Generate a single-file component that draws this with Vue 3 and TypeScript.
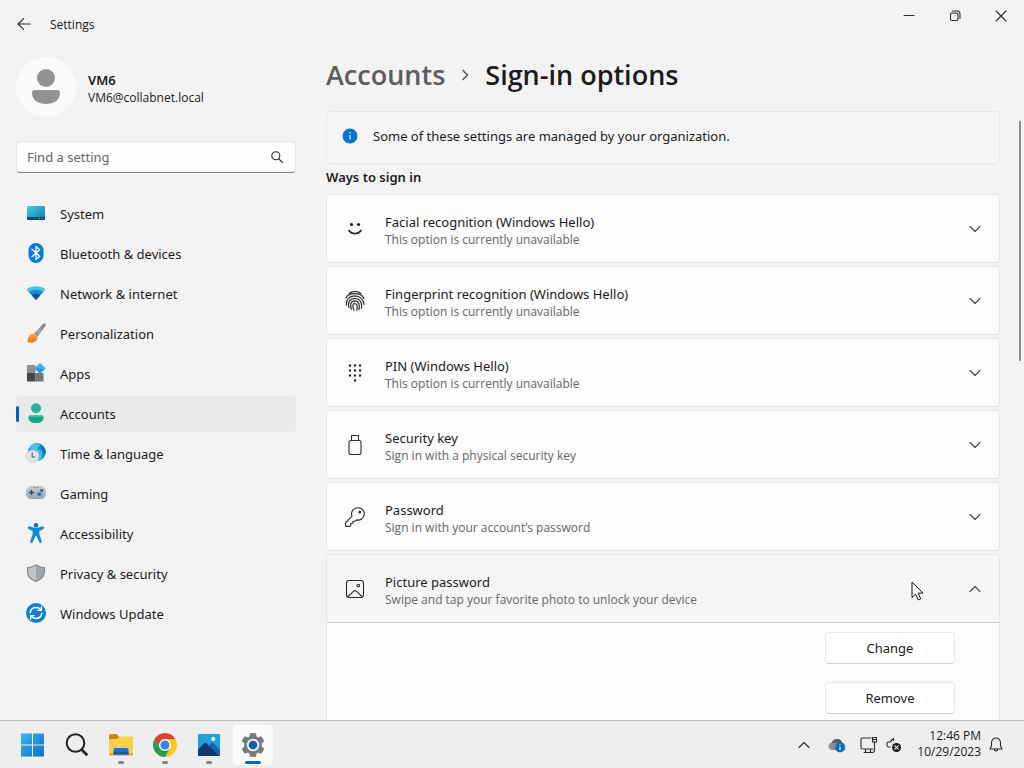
<script setup lang="ts">
import { ref } from 'vue'

interface NavItem {
  label: string
  art: string
}

interface SignInOption {
  title: string
  note: string
  art: string
}

const query = ref('')
const current = ref('Accounts')
const expanded = ref('Picture password')

const navItems: NavItem[] = [
  {
    label: 'System',
    art: `<defs><linearGradient id="sys" x1="0" y1="0" x2="1" y2="1"><stop offset="0" stop-color="#3fd0e6"/><stop offset="1" stop-color="#0f7ba8"/></linearGradient></defs>
      <rect x="1" y="3" width="18" height="14" rx="1.2" fill="url(#sys)"/><path d="M1 14h18v1.8a1.2 1.2 0 0 1-1.2 1.2H2.200A1.200 1.200 0 0 1 1 15.800z" fill="#0b4a6b"/><path d="M13 15.500h1M15.500 15.500h1" stroke="#9bd7ea" stroke-width="0.800"/>`,
  },
  {
    label: 'Bluetooth & devices',
    art: `<rect x="2.500" y="0" width="15" height="20" rx="7.500" fill="#0a78dc"/><path d="M6 6.300l7.700 7-3.700 3.300V3.400l3.700 3.300-7.700 7" fill="none" stroke="#fff" stroke-width="1.300" stroke-linejoin="round" stroke-linecap="round"/>`,
  },
  {
    label: 'Network & internet',
    art: `<path d="M0.500 6.500C5.500 2.200 14.500 2.200 19.500 6.500L10 17z" fill="#45c3f0"/><path d="M3 9.300c4-3.300 10-3.300 14 0L10 17z" fill="#1d8ad6"/><path d="M5.800 12.300c2.500-2 5.900-2 8.400 0L10 17z" fill="#0c539b"/>`,
  },
  {
    label: 'Personalization',
    art: `<defs><linearGradient id="hdl" x1="1" y1="0" x2="0" y2="1"><stop offset="0" stop-color="#6f7377"/><stop offset="0.600" stop-color="#a9acb0"/><stop offset="1" stop-color="#77797c"/></linearGradient><linearGradient id="tip" x1="0" y1="0" x2="0" y2="1"><stop offset="0" stop-color="#f9a23c"/><stop offset="1" stop-color="#ea6f1c"/></linearGradient></defs>
      <path d="M19 0.600c1 .6.800 1.700.2 2.700l-7.700 10.600-3.600-3.200 8.600-9.300c.8-.8 1.600-1.200 2.500-.8z" fill="url(#hdl)"/><path d="M7.600 10.700l3.800 3.400c.5 3.900-4.400 7-11.100 4.700 2.400-.8 1.300-2.200 2.100-4.600.8-2.400 3.300-3.500 5.200-3.500z" fill="url(#tip)"/>`,
  },
  {
    label: 'Apps',
    art: `<rect x="1" y="2" width="8.500" height="8" fill="#8c8f92"/><rect x="1" y="10" width="8.500" height="8.500" fill="#45484b"/><rect x="9.500" y="10" width="8" height="8.500" fill="#74777a"/><path d="M14 .600l5 4.800-5 5-5-5z" fill="#2597e3" stroke="#2597e3" stroke-linejoin="round"/><path d="M14 .600l5 4.800H9z" fill="#41b0f0"/>`,
  },
  {
    label: 'Accounts',
    art: `<circle cx="10" cy="5.300" r="5" fill="#22b496"/><path d="M2.400 14.200c0-1.200.9-2 2-2h11.200c1.100 0 2 .8 2 2 0 3.600-3 5.800-7.600 5.800s-7.600-2.200-7.600-5.800z" fill="#14a683"/><path d="M2.500 13.700c.2-.9 1-1.500 1.900-1.500h11.200c.9 0 1.700.6 1.900 1.500z" fill="#45c9ac"/>`,
  },
  {
    label: 'Time & language',
    art: `<circle cx="11" cy="9" r="9" fill="#1a9bd0"/><path d="M4 3.400c3-3.800 8-3.800 9-1.600.8 1.800-1.600 2.500-1.200 4.200.5 1.700 3.400.2 4 3 .5 2.500-1.300 3.600 0 6.400-4 4-8 2.500-9.800.8z" fill="#43c4e6"/><path d="M14 2.500l4 2.200 1.600 4.500-2 2z" fill="#0c6fb4"/><circle cx="6.600" cy="13.200" r="6.300" fill="#e4e5e7" stroke="#b8bbbf" stroke-width="0.600"/><path d="M6.200 9.400v4.600h3" fill="none" stroke="#4d555d" stroke-width="1.100"/>`,
  },
  {
    label: 'Gaming',
    art: `<defs><linearGradient id="pad" x1="0" y1="0" x2="0" y2="1"><stop offset="0" stop-color="#c6cbd1"/><stop offset="1" stop-color="#9aa3ad"/></linearGradient></defs><path d="M6 3h8c3.800 0 6 3 6 6.500 0 4.200-1.800 6.500-5 6.500H5c-3.200 0-5-2.300-5-6.500C0 6 2.200 3 6 3z" fill="url(#pad)"/><path d="M3 9.500h5M5.500 7v5" stroke="#384048" stroke-width="1.300"/><circle cx="15.700" cy="7.500" r="1.600" fill="#1e63ae"/><circle cx="13.400" cy="11.200" r="1.900" fill="#2573bd"/><path d="M8 4.500h1M10.700 4.500h1" stroke="#53606c"/>`,
  },
  {
    label: 'Accessibility',
    art: `<circle cx="10" cy="2.300" r="2.200" fill="#0e6fb8"/><path d="M2 4.200c.4-1 1.300-1.100 2.100-.7C8 5.300 12 5.300 15.900 3.500c.8-.4 1.700-.3 2.100.7.300.9 0 1.600-.9 2L13.400 8v3.400l2.400 6.800c.3.9-.1 1.500-.8 1.700-.8.200-1.500-.1-1.800-.9L10.400 13h-.8l-2.800 6c-.3.800-1 1.100-1.800.9-.7-.2-1.100-.8-.8-1.700l2.400-6.800V8L2.900 6.200c-.9-.4-1.200-1.100-.9-2z" fill="#1889d8"/>`,
  },
  {
    label: 'Privacy & security',
    art: `<path d="M10 1c3 2 5.500 2.700 9 3v5c0 4.800-3.500 7.800-9 10-5.500-2.200-9-5.200-9-10V4c3.500-.3 6-1 9-3z" fill="#8a8d90"/><path d="M10 2.500c2.600 1.600 4.800 2.300 7.700 2.600V9c0 4-2.800 6.600-7.700 8.600z" fill="#a3a6a9"/><path d="M10 2.500C7.400 4.100 5.200 4.800 2.300 5.100V9c0 4 2.800 6.600 7.700 8.600z" fill="#c2c4c6"/>`,
  },
  {
    label: 'Windows Update',
    art: `<circle cx="10" cy="10" r="10" fill="#0f7fd0"/><path d="M4.200 9.500c.6-3 3-4.900 5.800-4.900 2 0 3.600.8 4.800 2.200M15.800 10.500c-.6 3-3 4.900-5.800 4.900-2 0-3.600-.8-4.800-2.200" fill="none" stroke="#fff" stroke-width="1.500" stroke-linecap="round"/><path d="M15.400 3.800v3.600h-3.600M4.600 16.200v-3.600h3.600" fill="none" stroke="#fff" stroke-width="1.400" stroke-linecap="round"/>`,
  },
]

const options: SignInOption[] = [
  {
    title: 'Facial recognition (Windows Hello)',
    note: 'This option is currently unavailable',
    art: `<circle cx="6.500" cy="5.500" r="1.600" fill="#1b1b1b" stroke="none"/><circle cx="13.500" cy="5.500" r="1.600" fill="#1b1b1b" stroke="none"/><path d="M4 11.500c3 4.200 9 4.200 12 0" fill="none" stroke-width="1.700"/>`,
  },
  {
    title: 'Fingerprint recognition (Windows Hello)',
    note: 'This option is currently unavailable',
    art: `<path d="M4.300 2.300C7.800-.1 12.600-.1 16 2.400M.8 7C3.700 1.600 15.500.8 19 7.500M1.400 14C.9 9 3.800 5.100 9.700 4.900c5.200 0 9.200 3.600 9.300 8.600M3.900 16.500C2.700 12 4.200 7.600 9.800 7.500c4.500 0 6.700 3.300 6.800 7.500 0 1-.1 1.700-.3 2.400M6.400 18.200c-1.400-4.200-1-8.200 3.500-8.300 3.100 0 4.300 2.700 4.400 5.500 0 1.200-.1 2.100-.4 3.200M9 19.300c-.9-2-1.200-3.600-1.100-5 .1-2.300 3.800-2.400 4.100.2.200 1.800.2 3.200-.1 4.600" stroke-width="1.200"/>`,
  },
  {
    title: 'PIN (Windows Hello)',
    note: 'This option is currently unavailable',
    art: `<path d="M5 2.500h.01M10 2.500h.01M15 2.500h.01M5 7.500h.01M10 7.500h.01M15 7.500h.01M5 12.500h.01M10 12.500h.01M15 12.500h.01M10 17.500h.01" stroke-width="2.500"/>`,
  },
  {
    title: 'Security key',
    note: 'Sign in with a physical security key',
    art: `<rect x="4" y="5.500" width="12" height="14" rx="2"/><path d="M6.500 5.500v-5h7v5"/>`,
  },
  {
    title: 'Password',
    note: 'Sign in with your account\u2019s password',
    art: `<path d="M13 .7a6.200 6.200 0 1 1-1.500 12.200L10 14.300H8v2H5.800v2.200L4.700 19.400H1.500c-.6 0-1-.4-1-1v-2.500L7 9.200A6.200 6.200 0 0 1 13 .7z"/><circle cx="14.800" cy="5.200" r=".8" fill="#1b1b1b"/>`,
  },
  {
    title: 'Picture password',
    note: 'Swipe and tap your favorite photo to unlock your device',
    art: `<rect x="1.500" y="1.500" width="17" height="17" rx="2.500"/><circle cx="13.300" cy="6.500" r="1.300"/><path d="M3 17.500l5.800-5.400c.7-.6 1.700-.6 2.400 0l5.800 5.400"/>`,
  },
]

function toggle(title: string) {
  expanded.value = expanded.value === title ? '' : title
}
</script>

<template>
  <div class="desktop">
    <div class="window">
      <header class="titlebar">
        <button class="back" aria-label="Back">
          <svg width="14" height="12" viewBox="0 0 14 12" class="line"><path d="M13 6H1M6.500 .7L1 6l5.500 5.300" /></svg>
        </button>
        <span class="app-name">Settings</span>
        <div class="window-controls">
          <button aria-label="Minimize">
            <svg width="12" height="12" viewBox="0 0 12 12" class="line"><path d="M1 5.500h10" /></svg>
          </button>
          <button aria-label="Restore">
            <svg width="12" height="12" viewBox="0 0 12 12" class="line">
              <rect x="1.500" y="3" width="7.500" height="7.500" rx="1.500" />
              <path d="M3.500 1h4.500a3 3 0 0 1 3 3v4.500" />
            </svg>
          </button>
          <button aria-label="Close">
            <svg width="12" height="12" viewBox="0 0 12 12" class="line"><path d="M1 1l10 10M11 1L1 11" /></svg>
          </button>
        </div>
      </header>

      <div class="body">
        <aside class="sidebar">
          <div class="profile">
            <div class="avatar">
              <svg width="60" height="60" viewBox="0 0 60 60" fill="#929292">
                <circle cx="30" cy="21" r="9" />
                <path d="M16 36c0-2 1.500-3 3-3h22c1.500 0 3 1 3 3 0 7-6 11-14 11s-14-4-14-11z" />
              </svg>
            </div>
            <div>
              <div class="user-name">VM6</div>
              <div class="user-mail">VM6@collabnet.local</div>
            </div>
          </div>

          <label class="search">
            <input v-model="query" type="text" placeholder="Find a setting" aria-label="Find a setting" />
            <svg width="12" height="12" viewBox="0 0 12 12" class="line"><circle cx="4.800" cy="4.800" r="4" /><path d="M7.800 7.800l3.700 3.700" /></svg>
          </label>

          <nav>
            <a
              v-for="item in navItems"
              :key="item.label"
              href="#"
              :class="{ active: item.label === current }"
              @click.prevent="current = item.label"
            >
              <svg width="20" height="20" viewBox="0 0 20 20" v-html="item.art"></svg>
              <span>{{ item.label }}</span>
            </a>
          </nav>
        </aside>

        <main>
          <h1>
            <a href="#">Accounts</a>
            <svg width="8" height="12" viewBox="0 0 8 12"><path d="M1.500 1l5 5-5 5" fill="none" stroke="#5d5d5d" stroke-width="1.600" /></svg>
            <span>Sign-in options</span>
          </h1>

          <div class="info">
            <svg width="16" height="16" viewBox="0 0 16 16">
              <circle cx="8" cy="8" r="7.500" fill="#0a74cc" />
              <circle cx="8" cy="4.800" r=".8" fill="#fff" />
              <path d="M8 7v4.500" stroke="#fff" stroke-width="1.100" />
            </svg>
            <span>Some of these settings are managed by your organization.</span>
          </div>

          <h2>Ways to sign in</h2>

          <section class="options">
            <div v-for="opt in options" :key="opt.title" class="card" :class="{ open: opt.title === expanded }">
              <button class="card-head" :aria-expanded="opt.title === expanded" @click="toggle(opt.title)">
                <svg class="line" width="20" height="20" viewBox="0 0 20 20" v-html="opt.art"></svg>
                <span class="card-text">
                  <span class="card-title">{{ opt.title }}</span>
                  <span class="card-note">{{ opt.note }}</span>
                </span>
                <svg class="line chevron" width="12" height="8" viewBox="0 0 12 8"><path d="M1 1.500l5 5 5-5" /></svg>
              </button>
              <div v-if="opt.title === expanded" class="card-body">
                <button>Change</button>
                <button>Remove</button>
              </div>
            </div>
          </section>
        </main>
      </div>
      <div class="scrollbar"></div>
    </div>

    <footer class="taskbar">
      <div class="apps">
        <button aria-label="Start">
          <svg width="24" height="24" viewBox="0 0 24 24">
            <defs><linearGradient id="win" x1="0" y1="0" x2="1" y2="1"><stop offset="0" stop-color="#38b6f2" /><stop offset="1" stop-color="#0a6fc9" /></linearGradient></defs>
            <path d="M0 .500h11v11H0zM12 .500h11v11H12zM0 12.500h11v11H0zM12 12.500h11v11H12z" fill="url(#win)" />
          </svg>
        </button>
        <button aria-label="Search">
          <svg width="24" height="24" viewBox="0 0 24 24" fill="none" stroke="#222"><circle cx="10.500" cy="10" r="8.800" stroke-width="2" /><path d="M16.500 16.500l5.800 5.800" stroke-width="2.800" /></svg>
        </button>
        <button class="running" aria-label="File Explorer">
          <svg width="26" height="24" viewBox="0 0 26 24">
            <path d="M1 2.500A1.500 1.500 0 0 1 2.500 1h6L11 3.500V8H1z" fill="#c18a12" />
            <path d="M1 6h8l2.500-2.500H23.500A1.500 1.500 0 0 1 25 5v16a1.500 1.500 0 0 1-1.500 1.500h-21A1.500 1.500 0 0 1 1 21z" fill="#fad04a" />
            <path d="M1 20h24v1a1.500 1.500 0 0 1-1.500 1.500h-21A1.500 1.500 0 0 1 1 21z" fill="#e9ad2d" />
            <path d="M5.500 17a2 2 0 0 1 2-2h11a2 2 0 0 1 2 2v4.500h-15z" fill="#1a74c8" />
            <path d="M5.500 19h15v2.500h-15z" fill="#135b9f" />
          </svg>
        </button>
        <button class="running" aria-label="Chrome">
          <svg width="24" height="24" viewBox="0 0 24 24">
            <path d="M1.610 6A12 12 0 0 1 22.390 6H12L6.800 15z" fill="#dc4136" />
            <path d="M22.390 6A12 12 0 0 1 12 24l5.200-9L12 6z" fill="#fbc916" />
            <path d="M12 24A12 12 0 0 1 1.610 6l5.190 9h10.400z" fill="#279a4b" />
            <circle cx="12" cy="12" r="6" fill="#fff" /><circle cx="12" cy="12" r="4.600" fill="#3b82ea" />
          </svg>
        </button>
        <button class="running" aria-label="Photos">
          <svg width="22" height="22" viewBox="0 0 22 22">
            <rect width="22" height="22" rx="1" fill="#229fdc" />
            <path d="M10 12.500l3-3.200c.8-.8 1.700-.8 2.500 0L22 16v6H10z" fill="#1c5ea8" />
            <path d="M0 15.500l6-6.200c.8-.8 1.700-.8 2.500 0L21 22H1a1 1 0 0 1-1-1z" fill="#10386f" />
            <circle cx="15.200" cy="5" r="2" fill="#fff" />
          </svg>
        </button>
        <button class="running current" aria-label="Settings">
          <svg width="24" height="24" viewBox="0 0 24 24">
            <path d="M9.500 .500h5l.8 3.200 1.800 1 3.200-1 2.500 4.300-2.300 2.400v3.200l2.300 2.400-2.500 4.300-3.200-1-1.800 1-.8 3.200h-5l-.8-3.200-1.800-1-3.200 1L1.200 16l2.300-2.400v-3.200L1.200 8l2.500-4.300 3.200 1 1.800-1z" fill="#777b80" stroke="#777b80" stroke-width=".8" stroke-linejoin="round" />
            <circle cx="12" cy="12" r="6.300" fill="#e9edf1" /><circle cx="12" cy="12" r="4.300" fill="#1460a8" />
          </svg>
        </button>
      </div>

      <div class="tray">
        <button aria-label="Show hidden icons">
          <svg width="12" height="8" viewBox="0 0 12 8" class="line"><path d="M1 6.500l5-5 5 5" /></svg>
        </button>
        <button aria-label="OneDrive">
          <svg width="18" height="16" viewBox="0 0 18 16">
            <path d="M4.500 13C2 13 .500 11.500 .500 9.300c0-2 1.500-3.300 3-3.500C4.500 3.300 6.500 2 9 2c2.600 0 4.500 1.400 5.200 3.800 1.800.2 3 1.400 3 3.200V13z" fill="#8b8d90" />
            <path d="M3.500 5.800C4.500 3.300 6.500 2 9 2c2.600 0 4.500 1.400 5.200 3.800C11 6.500 8 5.500 3.500 5.800z" fill="#5b5d60" />
            <circle cx="12" cy="10.500" r="4.900" fill="#0a6fc4" /><path d="M12 9.800v3.200M12 7.400v1.200" stroke="#fff" stroke-width="1.200" />
          </svg>
        </button>
        <button aria-label="Network">
          <svg width="18" height="18" viewBox="0 0 18 18" class="line">
            <path d="M11 2H2.500A1.500 1.500 0 0 0 1 3.500v8A1.500 1.500 0 0 0 2.500 13h10.500M5.500 13v3M10.500 13v3M4 16.500h8" />
            <path d="M12.500 1.500h4v4.500h-4zM14.500 6v8c0 1.500-.5 2.500-2 2.500M12.500 3.500h4" />
          </svg>
        </button>
        <button aria-label="Volume muted">
          <svg width="16" height="16" viewBox="0 0 16 16" class="line">
            <path d="M7.500 3.500v-2L4 5H2.500A1.500 1.500 0 0 0 1 6.500v2A1.500 1.500 0 0 0 2.500 10H4" />
            <circle cx="10.500" cy="10.500" r="4.500" fill="#1b1b1b" stroke="none" /><path d="M8.800 8.800l3.400 3.400M12.200 8.800l-3.400 3.400" stroke="#fff" />
          </svg>
        </button>
        <div class="clock"><span>12:46 PM</span><span>10/29/2023</span></div>
        <button aria-label="Notifications">
          <svg width="14" height="16" viewBox="0 0 14 16" class="line">
            <path d="M7 1a4.500 4.500 0 0 0-4.500 4.500v3.300L1 12h12l-1.500-3.200V5.500A4.500 4.500 0 0 0 7 1zM5.300 12.300a1.700 1.700 0 0 0 3.400 0" />
          </svg>
        </button>
      </div>
    </footer>

    <svg class="pointer" width="13" height="20" viewBox="0 0 13 20">
      <path d="M1 1v15.500l3.600-3.400 2.600 5.800 2.500-1.100-2.600-5.700H12z" fill="#fff" stroke="#111" />
    </svg>
  </div>
</template>

<style>
html,
body {
  margin: 0;
  overflow: hidden;
}
</style>

<style scoped>
.desktop {
  position: relative;
  display: flex;
  flex-direction: column;
  height: 100vh;
  background: #f3f3f3;
  color: #1b1b1b;
  font-family: "Noto Sans", "Open Sans", sans-serif;
  font-size: 13px;
  line-height: 20px;
}

*,
*::before,
*::after {
  box-sizing: border-box;
}

button {
  margin: 0;
  padding: 0;
  border: 0;
  background: none;
  color: inherit;
  font: inherit;
}

a {
  color: inherit;
  text-decoration: none;
}

svg {
  flex: none;
  display: block;
}

.line {
  fill: none;
  stroke: #2b2b2b;
  stroke-width: 1.1;
  stroke-linecap: round;
  stroke-linejoin: round;
}

.window {
  position: relative;
  flex: 1;
  min-height: 0;
  display: flex;
  flex-direction: column;
  overflow: hidden;
}

.titlebar {
  flex: none;
  display: flex;
  align-items: center;
  height: 48px;
}

.back {
  display: grid;
  place-items: center;
  width: 48px;
  height: 48px;
}

.app-name,
.user-mail,
.card-note,
.clock {
  font-family: "Open Sans", "Noto Sans", sans-serif;
  font-size: 12px;
  line-height: 16px;
}

.app-name {
  padding: 2px 0 0 2px;
}

.window-controls {
  display: flex;
  align-self: flex-start;
  margin-left: auto;
}

.window-controls button {
  display: grid;
  place-items: center;
  width: 46px;
  height: 32px;
}

.body {
  flex: 1;
  min-height: 0;
  display: flex;
}

.sidebar {
  flex: none;
  width: 326px;
  padding: 9px 30px 0 16px;
}

.profile {
  display: flex;
  align-items: center;
  gap: 12px;
  height: 60px;
}

.avatar {
  border-radius: 50%;
  background: #fbfbfb;
}

.user-name {
  padding-top: 2px;
  font-weight: 600;
  line-height: 20px;
}

.search {
  display: flex;
  align-items: center;
  height: 32px;
  margin-top: 24px;
  padding: 0 12px 0 10px;
  border: 1px solid #e5e5e5;
  border-bottom-color: #868686;
  border-radius: 4px;
  background: #fdfdfd;
}

.search input {
  flex: 1;
  min-width: 0;
  padding: 0;
  border: 0;
  outline: 0;
  background: none;
  color: inherit;
  font: inherit;
}

.search input::placeholder {
  color: #666;
  opacity: 1;
}

nav {
  display: flex;
  flex-direction: column;
  gap: 4px;
  margin-top: 23px;
}

nav a {
  position: relative;
  display: flex;
  align-items: center;
  gap: 14px;
  height: 36px;
  padding-left: 10px;
  border-radius: 4px;
}

nav a svg {
  margin-bottom: 2px;
}

nav a.active {
  background: #eaeaea;
}

nav a.active::before {
  content: "";
  position: absolute;
  left: 0;
  top: 10px;
  width: 3px;
  height: 16px;
  border-radius: 2px;
  background: #0067b8;
}

main {
  flex: 1;
  min-width: 0;
  padding: 7px 24px 0 0;
}

h1 {
  display: flex;
  align-items: center;
  gap: 16px;
  margin: 0;
  font-family: "Open Sans", "Noto Sans", sans-serif;
  font-size: 27px;
  font-weight: 600;
  line-height: 40px;
}

h1 a {
  color: #5d5d5d;
}

.info {
  display: flex;
  align-items: center;
  gap: 15px;
  height: 53px;
  margin-top: 16px;
  padding: 0 15px 3px;
  border: 1px solid #e7e7e7;
  border-radius: 4px;
  background: #f5f5f5;
}

h2 {
  margin: 3px 0 7px;
  font-size: 13px;
  font-weight: 600;
  line-height: 20px;
}

.options {
  display: flex;
  flex-direction: column;
  gap: 3px;
}

.card {
  border: 1px solid #e5e5e5;
  border-radius: 4px;
  background: #fcfcfc;
  overflow: hidden;
}

.card-head {
  display: flex;
  align-items: center;
  gap: 20px;
  width: 100%;
  height: 67px;
  padding: 0 18px;
  text-align: left;
}

.card-text {
  flex: 1;
  display: flex;
  flex-direction: column;
  padding-top: 2px;
}

.card-title {
  line-height: 20px;
}

.card-note {
  color: #666;
}

.card.open .card-head {
  height: 68px;
  border-bottom: 1px solid #cfcfcf;
  background: #f6f6f6;
}

.chevron {
  stroke: #444;
}

.card.open .chevron {
  transform: rotate(180deg);
}

.card-body {
  display: flex;
  flex-direction: column;
  align-items: flex-end;
  gap: 18px;
  padding: 9px 44px 16px;
}

.card-body button {
  width: 130px;
  height: 32px;
  border: 1px solid #e8e8e8;
  border-bottom-color: #d0d0d0;
  border-radius: 4px;
  background: #fff;
}

.scrollbar {
  position: absolute;
  top: 121px;
  right: 3px;
  width: 2px;
  height: 240px;
  border-radius: 1px;
  background: #8a8a8a;
}

.taskbar {
  flex: none;
  display: flex;
  align-items: center;
  justify-content: space-between;
  height: 48px;
  padding: 0 21px 0 13px;
  border-top: 1px solid #bdbdbd;
  background: #eeeeee;
}

.apps {
  display: flex;
  gap: 4px;
}

.apps button {
  position: relative;
  display: grid;
  place-items: center;
  width: 40px;
  height: 40px;
  border-radius: 4px;
}

.apps .current {
  background: #fbfbfb;
}

.running::after {
  content: "";
  position: absolute;
  left: 17px;
  bottom: 1px;
  width: 6px;
  height: 3px;
  border-radius: 2px;
  background: #868686;
}

.apps .current::after {
  left: 12px;
  width: 16px;
  background: #0067b8;
}

.tray {
  display: flex;
  align-items: center;
  gap: 8px;
}

.tray button:first-child {
  margin-right: 10px;
}

.tray button:nth-child(3) {
  margin-left: 6px;
}

.clock {
  display: flex;
  flex-direction: column;
  margin-left: 7px;
  padding-bottom: 2px;
  text-align: right;
}

.pointer {
  position: absolute;
  left: 911px;
  top: 581px;
}
</style>
